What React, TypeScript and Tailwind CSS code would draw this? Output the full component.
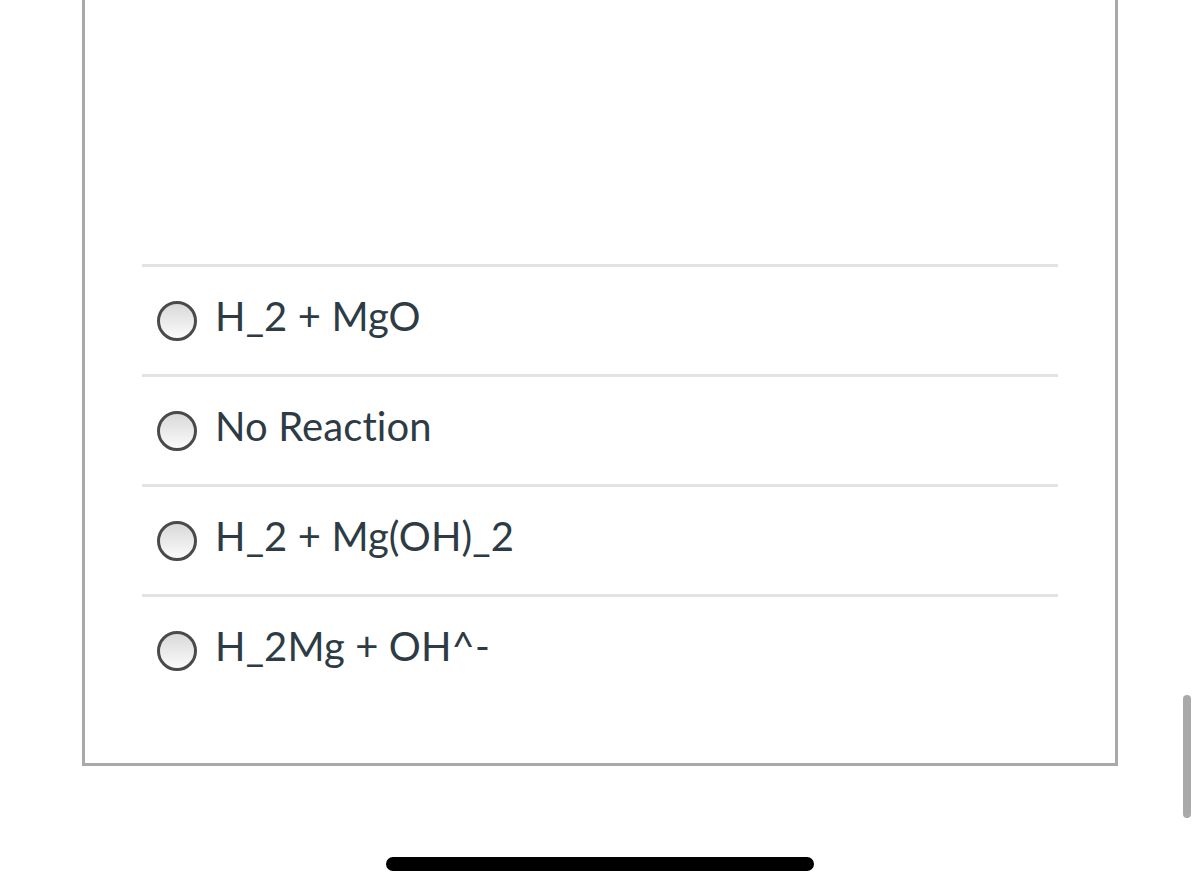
import React from "react";

const options = ["H_2 + MgO", "No Reaction", "H_2 + Mg(OH)_2", "H_2Mg + OH^-"];

export default function App() {
  return (
    <div className="relative w-[1200px] h-[894px] bg-white overflow-hidden" style={{ fontFamily: "Lato, 'Open Sans', sans-serif" }}>
      <div className="ml-[82px] w-[1036px] h-[766px] border-x-[3px] border-b-[3px] border-[#a9a9a9] pt-[264px]">
        <div className="ml-[57px] w-[916px]">
          {options.map((o, i) => (
            <div key={i} className="h-[110px] flex items-center border-t-[3px] border-[#e3e3e3]">
              <div className="ml-[15px] w-[40px] h-[40px] rounded-full border-[3px] border-[#4a4a4a] bg-gradient-to-b from-[#d9d9d9] to-[#fbfbfb] shrink-0" />
              <span className="ml-[18px] text-[40px] leading-none text-[#2d3b45] -mt-[10px] tracking-[0.1px]">{o}</span>
            </div>
          ))}
        </div>
      </div>
      <div className="absolute left-[1183px] top-[695px] w-[8px] h-[123px] rounded-full bg-[#a9a9a9]" />
      <div className="absolute left-[386px] top-[857px] w-[428px] h-[14px] rounded-full bg-black" />
    </div>
  );
}
